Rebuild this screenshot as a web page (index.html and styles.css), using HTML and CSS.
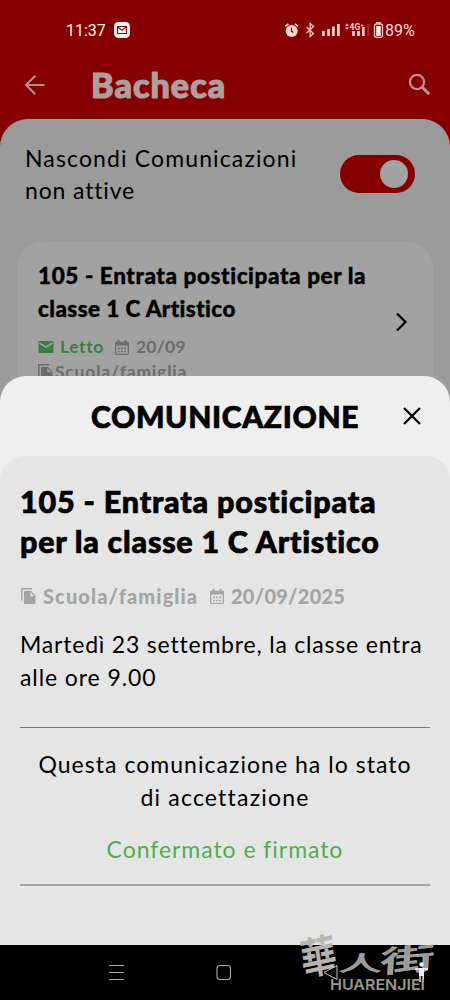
FILE: index.html
```
<!DOCTYPE html>
<html lang="it">
<head>
<meta charset="utf-8">
<title>Bacheca</title>
<link rel="stylesheet" href="styles.css">
</head>
<body>
<div class="screen">
  <header class="top">
    <div class="status">
      <span class="time">11:37</span>
      <svg class="mailbadge" width="16" height="16" viewBox="0 0 16 16"><rect width="16" height="16" rx="4.5" fill="#fff0ee"/><path d="M3.5 4.5h9v7h-9zM4 5l4 3.4L12 5" fill="none" stroke="#651513" stroke-width="1.1"/></svg>
      <svg class="sysicons" width="100" height="20" viewBox="284 20 100 20">
        <circle cx="291.7" cy="31" r="6" fill="#ffd6d2"/><path d="M285.4 26.4l3-2.6M298 26.4l-3-2.6" stroke="#ffd6d2" stroke-width="1.6"/><path d="M291.5 27.8v3.5l1.8 1.2" stroke="#870000" stroke-width="1.3" fill="none"/>
        <path d="M306.5 27l7 6.5-3.3 3V23.5l3.3 3-7 6.5" fill="none" stroke="#ffc6c2" stroke-width="1.3"/>
        <path d="M323.4 36v-5M328.600 36v-7M333.400 36v-9.500M338.400 36V24" stroke="#ffd6d2" stroke-width="2.700"/>
        <path d="M345 26l2-2.500 2 2.500zM345 27.500l2 2.500 2-2.500z" fill="#ffc6c2"/>
        <text x="349.500" y="29.500" class="net">4G⁺</text>
        <path d="M353.500 36v-5M358.500 36v-5M363.300 36v-9" stroke="#ffd6d2" stroke-width="2.700"/><path d="M368.400 36V24" stroke="#a32525" stroke-width="2.600"/>
        <path d="M376 22.800h5" stroke="#ffc6c2" stroke-width="1.500"/><rect x="374.500" y="24" width="8" height="13.300" rx="2" fill="none" stroke="#ffc6c2" stroke-width="1.300"/><rect x="376.200" y="26" width="4.600" height="10" fill="#ffe4e0"/>
      </svg>
      <span class="pct">89%</span>
    </div>
    <div class="bar">
      <svg class="back" width="22" height="22" viewBox="0 0 22 22"><path d="M20.500 11H2.500M11.300 1.700L2 11l9.300 9.300" fill="none" stroke="#b09090" stroke-width="2"/></svg>
      <h1>Bacheca</h1>
      <svg class="search" width="24" height="24" viewBox="0 0 24 24"><circle cx="9" cy="9" r="7.100" fill="none" stroke="#b99393" stroke-width="2.200"/><path d="M14 14l7.200 7.200" stroke="#b99393" stroke-width="3"/></svg>
    </div>
  </header>
  <main class="board">
    <div class="filter">
      <div class="label"><div class="f1">Nascondi Comunicazioni</div><div class="f2">non attive</div></div>
      <div class="toggle"><span class="knob"></span></div>
    </div>
    <article class="card">
      <div class="info">
        <div class="c1">105 - Entrata posticipata per la</div>
        <div class="c2">classe 1 C Artistico</div>
        <div class="meta">
          <svg width="16" height="12" viewBox="0 0 16 12"><rect x=".5" width="15" height="12" rx="1.300" fill="#3a7d3d"/><path d="M1.500 2L8 6.200 14.500 2" fill="none" stroke="#a1a1a1" stroke-width="1.500"/></svg>
          <span class="read">Letto</span>
          <svg class="cal" width="14" height="15" viewBox="0 0 14 15"><use href="#calendar"/></svg>
          <span class="day">20/09</span>
        </div>
        <div class="meta aud">
          <svg width="15" height="16" viewBox="0 0 15 16"><use href="#copy"/></svg>
          <span class="who">Scuola/famiglia</span>
        </div>
      </div>
      <svg class="chev" width="14" height="20" viewBox="0 0 14 20"><path d="M2 1.500L10.500 10 2 18.500" fill="none" stroke="#000" stroke-width="2.200"/></svg>
    </article>
  </main>
  <section class="sheet">
    <div class="sheethead">
      <h2>COMUNICAZIONE</h2>
      <svg width="18" height="18" viewBox="0 0 18 18"><path d="M1 1l16 16M17 1L1 17" stroke="#000" stroke-width="2.100"/></svg>
    </div>
    <div class="body">
      <div class="b1">105 - Entrata posticipata</div>
      <div class="b2">per la classe 1 C Artistico</div>
      <div class="details">
        <svg width="15" height="16" viewBox="0 0 15 16"><use href="#copy"/></svg>
        <span class="bwho">Scuola/famiglia</span>
        <svg class="bcal" width="14" height="15" viewBox="0 0 14 15"><use href="#calendar"/></svg>
        <span class="bday">20/09/2025</span>
      </div>
      <div class="m1">Martedì 23 settembre, la classe entra</div>
      <div class="m2">alle ore 9.00</div>
      <div class="state">
        <div class="s1">Questa comunicazione ha lo stato</div>
        <div class="s2">di accettazione</div>
        <div class="ok">Confermato e firmato</div>
      </div>
    </div>
  </section>
  <nav class="nav">
    <svg width="450" height="55" viewBox="0 945 450 55">
      <path d="M109 965.500h15M109 972.500h15M109 979.500h15" stroke="#aaa" stroke-width="1"/>
      <rect x="217" y="965.500" width="13.500" height="14" rx="3" fill="none" stroke="#aaa" stroke-width="1.100"/>
    </svg>
  </nav>
  <svg class="mark" width="180" height="100" viewBox="270 900 180 100">
    <g class="cjk"><text class="hua" transform="translate(303 976) rotate(-12) skewX(-4) scale(1 1.200)" font-size="36">華</text>
    <text transform="translate(338 971) skewX(-8) scale(1.250 .6)" font-size="35">人</text>
    <text transform="translate(380 973) rotate(-5) skewX(-8) scale(1.650 .9)" font-size="33">街</text></g>
    <path d="M337 965.500l-13 7 13 7z" fill="none" stroke="#c8c8c8" stroke-width="1"/>
    <circle cx="421.500" cy="964.500" r="2.200" fill="#eee"/><path d="M415 969h13" stroke="#eee" stroke-width="1.700"/><path d="M419 968h5v8h-5z" fill="#eee"/><path d="M420 975v7M423.200 975v7" stroke="#eee" stroke-width="1.500"/>
    <text class="latin" x="330" y="989.500" textLength="95" lengthAdjust="spacingAndGlyphs">HUARENJIEI</text>
  </svg>
</div>
<svg width="0" height="0" class="defs">
  <symbol id="calendar" viewBox="0 0 14 15"><path fill="currentColor" fill-rule="evenodd" d="M2.500 0h2v1.700h5V0h2v1.700H13q1 0 1 1V14q0 1-1 1H1q-1 0-1-1V2.700q0-1 1-1h1.500zM1.300 5.500v8.200h11.400V5.500z"/><path d="M3 8.300h8M3 11.500h8" stroke="currentColor" stroke-width="1.700" stroke-dasharray="1.800 1.300"/></symbol>
  <symbol id="copy" viewBox="0 0 15 16"><path d="M.8 12.500V.8H11" fill="none" stroke="currentColor" stroke-width="1.500"/><path fill="currentColor" fill-rule="evenodd" d="M4 3h6l4.500 4.500V15q0 1-1 1H4q-1 0-1-1V4q0-1 1-1zM9.300 4v4.200h4.200z"/></symbol>
</svg>
</body>
</html>
```
FILE: styles.css
```
* { box-sizing: border-box; }
body { margin: 0; font-family: Lato, sans-serif; font-variant-ligatures: none; color: #000; }
.screen { position: relative; width: 450px; height: 1000px; overflow: hidden; background: #870000; white-space: nowrap; display: flex; flex-direction: column; }
h1, h2 { margin: 0; font-weight: 900; }
svg { flex: none; display: block; }
.defs { position: absolute; }
.top { height: 119px; flex: none; }
.status { height: 50px; padding: 21px 0 0 66px; display: flex; align-items: flex-start; color: #ffdcd8; }
.time { width: 48px; font: 400 16px/20px Roboto, sans-serif; letter-spacing: 0; color: #fff0ee; }
.mailbadge { margin-top: 1px; }
.sysicons { margin: -1px 0 0 154px; }
.net { font: 700 8.500px Roboto, sans-serif; fill: #ffc6c2; }
.pct { margin-left: 1px; font: 400 16px/20px Roboto, sans-serif; }
.bar { display: flex; align-items: center; height: 69px; padding: 0 19px 0 24px; }
h1 { flex: 1; margin: 0 0 0 45px; font-size: 34px; line-height: 40px; color: #b09e9e; letter-spacing: 1.100px; -webkit-text-stroke: 1.200px #b09e9e; }
.search { margin-right: -1px; }
.board { flex: 1; background: #9b9b9b; border-radius: 28px 28px 0 0; border-top: 1px solid #b78f8f; padding: 22px 17px 0; }
.filter { display: flex; justify-content: space-between; height: 100px; padding: 0 18px 0 8px; font-size: 23px; line-height: 32px; }
.f1 { letter-spacing: 1.130px; }
.f2 { letter-spacing: .85px; }
.toggle { width: 75px; height: 38px; margin-top: 13px; padding: 5px 7px; border-radius: 19px; background: #870000; display: flex; justify-content: flex-end; }
.knob { width: 28px; height: 28px; border-radius: 50%; background: #a2a2a2; }
.card { height: 200px; border-radius: 26px; background: #a2a2a2; padding: 17px 24px 0 21px; display: flex; justify-content: space-between; }
.c1, .c2 { font-size: 22.500px; line-height: 33px; font-weight: 900; -webkit-text-stroke: .4px #000; }
.c1 { letter-spacing: .6px; }
.c2 { letter-spacing: .4px; }
.meta { display: flex; align-items: center; height: 26px; margin-top: 9px; color: #6c6c6c; font-size: 17.500px; line-height: 26px; font-weight: 700; }
.aud { margin-top: -1px; }
.read { color: #3a7d3d; width: 43px; margin-left: 6px; letter-spacing: .6px; }
.cal { margin-left: 12px; }
.day { margin-left: 7px; letter-spacing: .2px; }
.who { margin-left: 2px; letter-spacing: .8px; }
.chev { margin-top: 53px; }
.sheet { position: absolute; left: 0; top: 376px; width: 450px; height: 569px; background: #efefef; border-radius: 26px 26px 0 0; }
.sheethead { height: 80px; display: flex; align-items: center; justify-content: space-between; padding: 0 29px 0 91px; }
h2 { font-size: 30px; line-height: 40px; letter-spacing: .65px; -webkit-text-stroke: .7px #000; }
.body { height: 489px; background: #e5e5e5; border-radius: 24px 24px 0 0; padding: 25px 20px 0; }
.b1, .b2 { font-size: 30.500px; line-height: 40px; font-weight: 900; -webkit-text-stroke: .7px #000; }
.b1 { letter-spacing: .8px; }
.b2 { letter-spacing: .73px; }
.details { display: flex; align-items: center; height: 26px; margin: 22px 0 19px; padding-left: 1px; color: #a4a4a4; font-size: 20px; line-height: 26px; font-weight: 900; }
.bwho { width: 156px; margin-left: 7px; letter-spacing: 1.100px; }
.bcal { margin-left: 11px; }
.bday { margin-left: 7px; letter-spacing: .25px; }
.m1, .m2, .s1, .s2, .ok { font-size: 23px; line-height: 32.500px; }
.m1 { letter-spacing: .8px; }
.m2 { letter-spacing: .9px; }
.s1 { letter-spacing: 1.030px; }
.s2 { letter-spacing: 1.200px; }
.state { margin-top: 34px; height: 159px; border-top: 1px solid #777; border-bottom: 2px solid #a5a5a5; padding-top: 20px; text-align: center; }
.ok { color: #4caf50; margin-top: 20px; letter-spacing: .95px; }
.nav { height: 55px; flex: none; background: #000; z-index: 1; }
.mark { position: absolute; left: 270px; top: 900px; z-index: 2; }
.cjk { font-family: "Noto Sans CJK TC", sans-serif; font-weight: 500; fill: #999; stroke: #bdbab2; stroke-width: .5; }
.hua { fill: #b4b3af; }
.latin { font: 600 15px Inter, sans-serif; fill: #999790; }
```
